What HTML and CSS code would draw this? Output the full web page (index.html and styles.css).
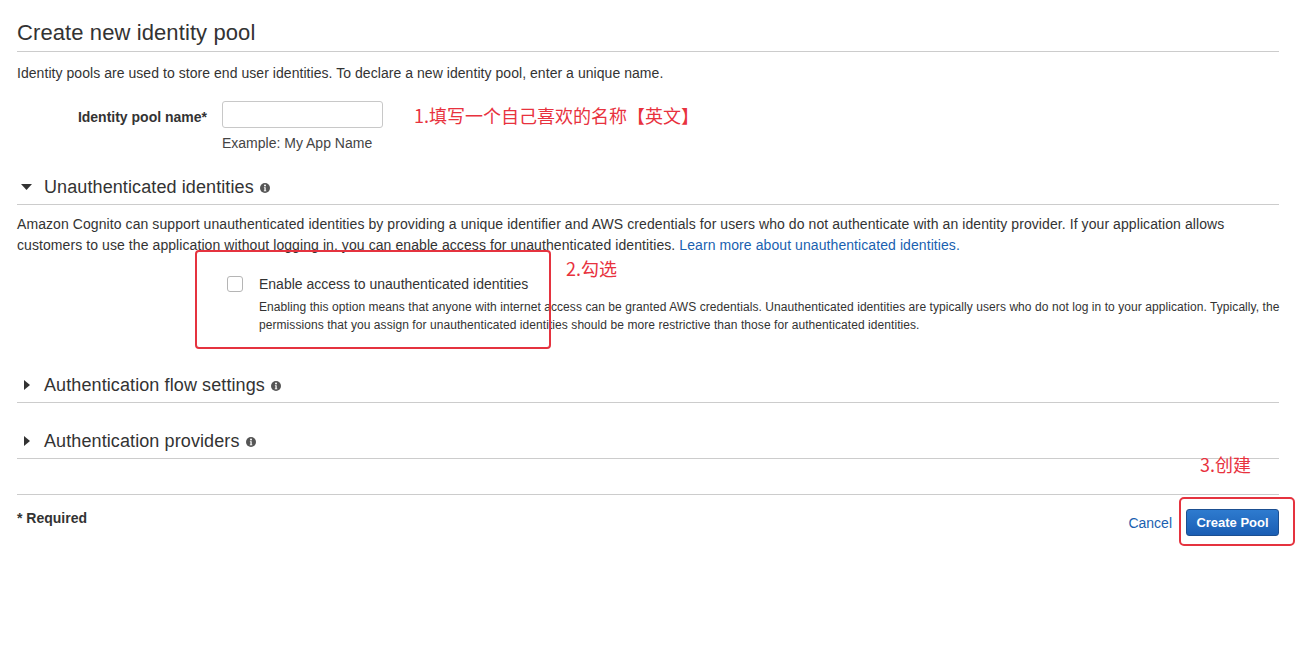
FILE: index.html
```html
<!DOCTYPE html>
<html>
<head>
<meta charset="utf-8">
<link rel="stylesheet" href="styles.css">
</head>
<body>
<div class="page">
  <div class="title-bar"><h1>Create new identity pool</h1></div>
  <p class="intro">Identity pools are used to store end user identities. To declare a new identity pool, enter a unique name.</p>

  <div class="form-row">
    <label class="field-label">Identity pool name*</label>
    <input class="text-input" type="text">
    <span class="note note-inline">1.填写一个自己喜欢的名称【英文】</span>
  </div>
  <div class="hint">Example: My App Name</div>

  <div class="section-head first">
    <span class="caret"><svg width="11" height="6" viewBox="0 0 11 6"><path d="M0 0H11L5.5 6Z" fill="#333"/></svg></span>
    <span class="section-title">Unauthenticated identities</span>
    <svg class="info" width="10" height="10" viewBox="0 0 10 10"><circle cx="5" cy="5" r="5" fill="#555"/><circle cx="5" cy="2.6" r="1" fill="#fff"/><path d="M3.9 4.2H5.7V7.4H6.3V8.2H3.8V7.4H4.4V5H3.9Z" fill="#fff"/></svg>
  </div>
  <p class="para">Amazon Cognito can support unauthenticated identities by providing a unique identifier and AWS credentials for users who do not authenticate with an identity provider. If your application allows<br>customers to use the application without logging in, you can enable access for unauthenticated identities. <a href="#" class="link">Learn more about unauthenticated identities.</a></p>

  <div class="check-row">
    <span class="checkbox"></span>
    <div class="check-body">
      <div class="check-label">Enable access to unauthenticated identities</div>
      <div class="check-desc">Enabling this option means that anyone with internet access can be granted AWS credentials. Unauthenticated identities are typically users who do not log in to your application. Typically, the<br>permissions that you assign for unauthenticated identities should be more restrictive than those for authenticated identities.</div>
    </div>
  </div>

  <div class="section-head second">
    <span class="caret caret-right"><svg width="6" height="10" viewBox="0 0 6 10"><path d="M0 0V10L6 5Z" fill="#333"/></svg></span>
    <span class="section-title">Authentication flow settings</span>
    <svg class="info" width="10" height="10" viewBox="0 0 10 10"><circle cx="5" cy="5" r="5" fill="#555"/><circle cx="5" cy="2.6" r="1" fill="#fff"/><path d="M3.9 4.2H5.7V7.4H6.3V8.2H3.8V7.4H4.4V5H3.9Z" fill="#fff"/></svg>
  </div>

  <div class="section-head third">
    <span class="caret caret-right"><svg width="6" height="10" viewBox="0 0 6 10"><path d="M0 0V10L6 5Z" fill="#333"/></svg></span>
    <span class="section-title">Authentication providers</span>
    <svg class="info" width="10" height="10" viewBox="0 0 10 10"><circle cx="5" cy="5" r="5" fill="#555"/><circle cx="5" cy="2.6" r="1" fill="#fff"/><path d="M3.9 4.2H5.7V7.4H6.3V8.2H3.8V7.4H4.4V5H3.9Z" fill="#fff"/></svg>
  </div>

  <div class="footer">
    <span class="required">* Required</span>
    <div class="actions">
      <a href="#" class="cancel">Cancel</a>
      <button class="primary">Create Pool</button>
    </div>
  </div>

  <div class="mark mark-check"></div>
  <span class="note note-check">2.勾选</span>
  <span class="note note-create">3.创建</span>
  <div class="mark mark-create"></div>
</div>
</body>
</html>
```

FILE: styles.css
```css
body {
  margin: 0;
  background: #fff;
  font-family: "Liberation Sans", Arial, sans-serif;
  color: #333;
  font-size: 14px;
}
.page {
  position: relative;
  width: 1262px;
  height: 649px;
  padding: 0 28px 0 17px;
}
.title-bar {
  padding-top: 20px;
  padding-bottom: 5px;
  border-bottom: 1px solid #ccc;
}
h1 {
  margin: 0;
  font-size: 22px;
  font-weight: normal;
  line-height: 26px;
  color: #333;
  letter-spacing: 0.1px;
}
.intro {
  margin: 11px 0 0;
  line-height: 20px;
  letter-spacing: 0.05px;
}
.form-row {
  display: flex;
  align-items: flex-start;
  margin-top: 18px;
}
.field-label {
  width: 190px;
  text-align: right;
  font-weight: bold;
  margin-right: 15px;
  margin-top: 7px;
  line-height: 18px;
}
.text-input {
  width: 161px;
  height: 27px;
  box-sizing: border-box;
  border: 1px solid #c8c8c8;
  border-radius: 3px;
  margin: 0;
  padding: 0 6px;
}
.note {
  font-family: "Noto Sans CJK SC", "Liberation Sans", sans-serif;
  color: #e8323e;
  font-size: 18px;
  line-height: 24px;
}
.note-inline {
  margin-left: 31px;
  margin-top: 2px;
}
.hint {
  margin: 6px 0 0 205px;
  line-height: 18px;
  color: #444;
}
.section-head {
  display: flex;
  align-items: center;
  height: 24px;
  padding-bottom: 5px;
  border-bottom: 1px solid #ccc;
}
.section-head.first { margin-top: 23px; }
.section-head.second { margin-top: 39px; }
.section-head.third { margin-top: 26px; }
.caret {
  width: 27px;
  display: flex;
  align-items: center;
  padding-left: 4px;
  box-sizing: border-box;
}
.caret-right { padding-left: 7px; }
.section-title {
  font-size: 18px;
  line-height: 24px;
  color: #333;
  letter-spacing: 0.1px;
}
.info {
  margin-left: 6px;
  margin-top: 2px;
}
.para {
  margin: 9px 0 0;
  line-height: 21px;
  letter-spacing: 0.08px;
}
.link {
  color: #1a5fb0;
  text-decoration: none;
}
.check-row {
  display: flex;
  margin: 19px 0 0 210px;
}
.checkbox {
  width: 16px;
  height: 16px;
  box-sizing: border-box;
  border: 1px solid #b5b5b5;
  border-radius: 3px;
  margin-top: 1px;
  margin-right: 16px;
  flex: none;
}
.check-label {
  line-height: 18px;
}
.check-desc {
  margin-top: 5px;
  font-size: 12px;
  line-height: 18px;
  color: #333;
  white-space: nowrap;
  letter-spacing: 0.07px;
}
.footer {
  margin-top: 35px;
  border-top: 1px solid #ccc;
  padding-top: 14px;
  display: flex;
  justify-content: space-between;
  align-items: flex-start;
}
.required {
  font-weight: bold;
  line-height: 18px;
}
.actions {
  display: flex;
  align-items: center;
  gap: 14px;
}
.cancel {
  color: #1a5fb0;
  text-decoration: none;
  margin-top: 1px;
}
.primary {
  width: 93px;
  height: 27px;
  box-sizing: border-box;
  border: 1px solid #1b4f91;
  border-radius: 3px;
  background: linear-gradient(#2e7bcf, #1a5eb4);
  color: #fff;
  font-family: "Liberation Sans", Arial, sans-serif;
  font-weight: bold;
  font-size: 13px;
  padding: 0;
}
.mark {
  position: absolute;
  border: 2px solid #e5333f;
  border-radius: 4px;
  box-sizing: border-box;
}
.mark-check {
  left: 195px;
  top: 250px;
  width: 356px;
  height: 99px;
}
.mark-create {
  left: 1179px;
  top: 497px;
  width: 116px;
  height: 49px;
  border-radius: 5px;
}
.note-check {
  position: absolute;
  left: 566px;
  top: 256px;
}
.note-create {
  position: absolute;
  left: 1200px;
  top: 452px;
}
```
